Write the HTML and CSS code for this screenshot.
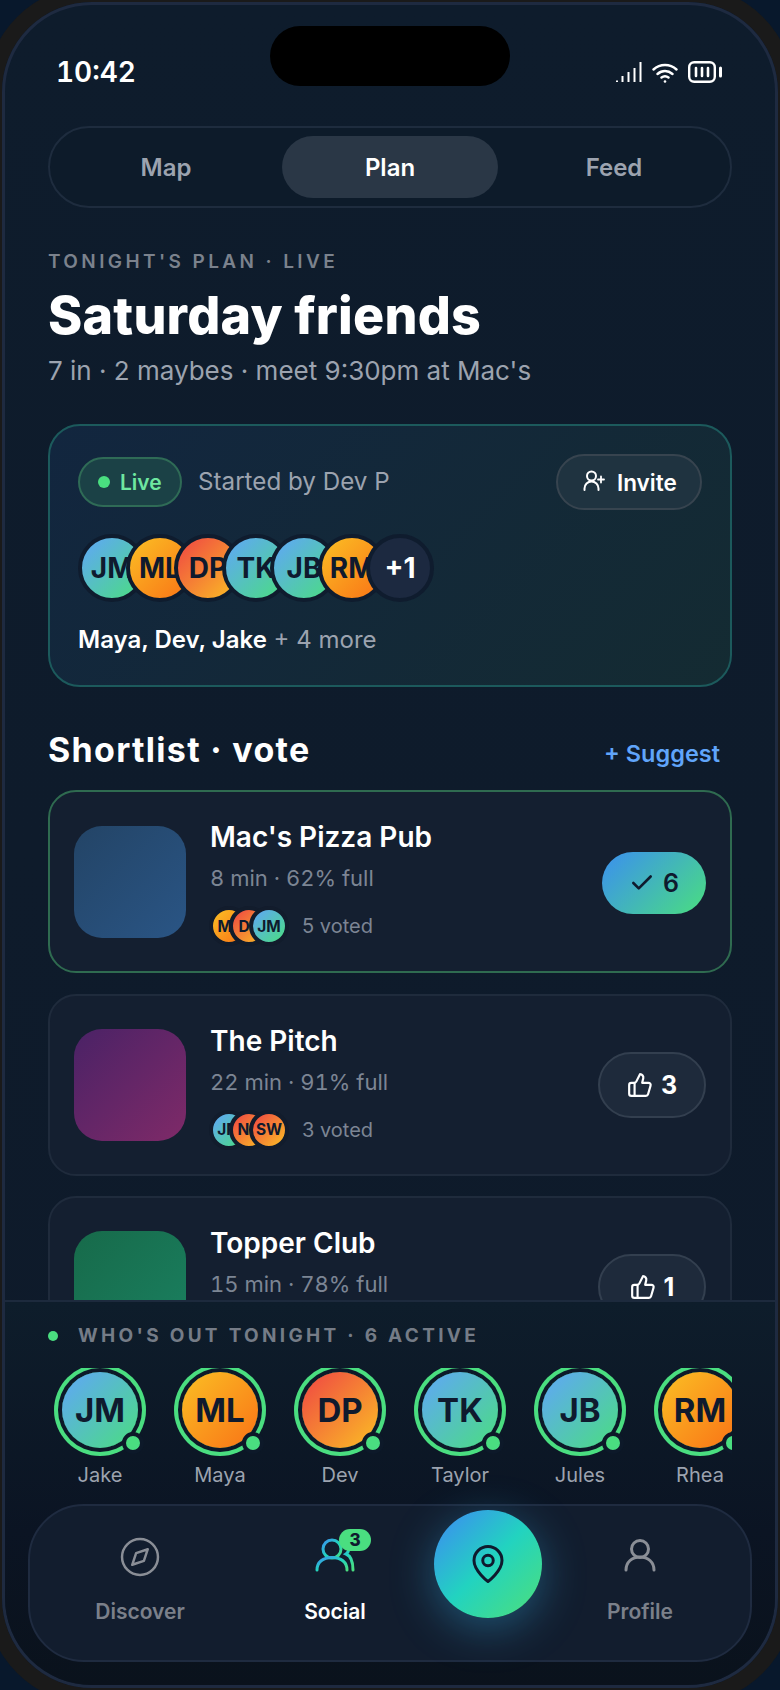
FILE: index.html
```html
<!DOCTYPE html>
<html lang="en">
<head>
<meta charset="utf-8">
<title>Saturday friends</title>
<link rel="stylesheet" href="styles.css">
</head>
<body>
<svg class="defs" width="0" height="0" aria-hidden="true">
  <defs>
    <linearGradient id="socialGrad" x1="0" y1="0" x2="1" y2="1">
      <stop offset="0" stop-color="#3b8ff0"/>
      <stop offset="0.5" stop-color="#22d3c0"/>
      <stop offset="1" stop-color="#4ade80"/>
    </linearGradient>
  </defs>
</svg>
<div class="screen">
  <div class="island"></div>
  <header class="status">
    <span class="time">10:42</span>
    <div class="status-icons">
      <svg class="ic-signal" width="26" height="22" viewBox="0 0 26 22" fill="none" stroke="#fff" stroke-width="2"><path d="M1 21v-1.500M6.500 21v-6M12.500 21v-10M18.500 21v-14M24.500 21v-20"/></svg>
      <svg class="ic-wifi" width="26" height="21" viewBox="0 0 26 21" fill="none" stroke="#fff" stroke-width="2.400" stroke-linecap="round"><path d="M1.500 7.500C8 1.500 18 1.500 24.500 7.500M5.500 12C10 8 16 8 20.500 12M9.500 15.500C11.500 14 14.500 14 16.500 15.500"/><circle cx="13" cy="19.500" r="1.300" fill="#fff" stroke="none"/></svg>
      <svg class="ic-batt" width="36" height="22" viewBox="0 0 36 22" fill="none" stroke="#fff"><rect x="1.200" y="1.200" width="25.600" height="19.600" rx="5" stroke-width="2.400"/><path d="M8 7v8M14 7v8M20 7v8" stroke-width="2.600" stroke-linecap="round"/><path d="M32.500 7v8" stroke-width="3" stroke-linecap="round"/></svg>
    </div>
  </header>

  <main class="main">
    <nav class="tabs">
      <div class="tab">Map</div>
      <div class="tab tab-on">Plan</div>
      <div class="tab">Feed</div>
    </nav>

    <p class="eyebrow">TONIGHT'S PLAN · LIVE</p>
    <h1 class="title">Saturday friends</h1>
    <p class="sub">7 in · 2 maybes · meet 9:30pm at Mac's</p>

    <section class="hero">
      <div class="hero-top">
        <span class="live"><i class="live-dot"></i>Live</span>
        <span class="started">Started by Dev P</span>
        <button class="invite">
          <svg width="26" height="26" viewBox="0 0 26 26" fill="none" stroke="#fff" stroke-width="2" stroke-linecap="round"><circle cx="10.500" cy="7" r="4.500"/><path d="M3.500 21v-1.500a6.500 6.500 0 0 1 14 0V21"/><path d="M20 7.500v6M17 10.500h6" stroke-width="1.800"/></svg>
          Invite
        </button>
      </div>
      <div class="stack">
        <span class="av av-blue">JM</span>
        <span class="av av-orange">ML</span>
        <span class="av av-red">DP</span>
        <span class="av av-blue">TK</span>
        <span class="av av-blue">JB</span>
        <span class="av av-orange">RM</span>
        <span class="av av-more">+1</span>
      </div>
      <p class="names"><b>Maya, Dev, Jake</b> + 4 more</p>
    </section>

    <div class="sec-head">
      <h2 class="sec-title">Shortlist · vote</h2>
      <span class="suggest">+ Suggest</span>
    </div>

    <article class="card card-top">
      <div class="thumb thumb-blue"></div>
      <div class="card-body">
        <h3 class="card-title">Mac's Pizza Pub</h3>
        <p class="card-meta">8 min · 62% full</p>
        <div class="voters">
          <span class="mini av-orange">ML</span><span class="mini av-red">DP</span><span class="mini av-blue">JM</span>
          <span class="voted">5 voted</span>
        </div>
      </div>
      <button class="vote vote-on">
        <svg width="26" height="26" viewBox="0 0 24 24" fill="none" stroke="#0f1a2e" stroke-width="2.400" stroke-linecap="round" stroke-linejoin="round"><path d="M20 6 9 17l-5-5"/></svg>
        6
      </button>
    </article>

    <article class="card">
      <div class="thumb thumb-purple"></div>
      <div class="card-body">
        <h3 class="card-title">The Pitch</h3>
        <p class="card-meta">22 min · 91% full</p>
        <div class="voters">
          <span class="mini av-blue">JM</span><span class="mini av-red">NK</span><span class="mini av-red">SW</span>
          <span class="voted">3 voted</span>
        </div>
      </div>
      <button class="vote">
        <svg width="26" height="26" viewBox="0 0 24 24" fill="none" stroke="#fff" stroke-width="2" stroke-linecap="round" stroke-linejoin="round"><path d="M7 10v12"/><path d="M15 5.880 14 10h5.830a2 2 0 0 1 1.920 2.560l-2.330 8A2 2 0 0 1 17.500 22H4a2 2 0 0 1-2-2v-8a2 2 0 0 1 2-2h2.760a2 2 0 0 0 1.790-1.110L12 2a3.130 3.130 0 0 1 3 3.880Z"/></svg>
        3
      </button>
    </article>

    <article class="card">
      <div class="thumb thumb-green"></div>
      <div class="card-body">
        <h3 class="card-title">Topper Club</h3>
        <p class="card-meta">15 min · 78% full</p>
        <div class="voters"></div>
      </div>
      <button class="vote">
        <svg width="26" height="26" viewBox="0 0 24 24" fill="none" stroke="#fff" stroke-width="2" stroke-linecap="round" stroke-linejoin="round"><path d="M7 10v12"/><path d="M15 5.880 14 10h5.830a2 2 0 0 1 1.920 2.560l-2.330 8A2 2 0 0 1 17.500 22H4a2 2 0 0 1-2-2v-8a2 2 0 0 1 2-2h2.760a2 2 0 0 0 1.790-1.110L12 2a3.130 3.130 0 0 1 3 3.880Z"/></svg>
        1
      </button>
    </article>
  </main>

  <footer class="panel">
    <div class="out-head"><i class="out-dot"></i>WHO'S OUT TONIGHT · 6 ACTIVE</div>
    <div class="people">
      <div class="person"><div class="ring av-blue">JM<i class="online"></i></div><span class="pname">Jake</span></div>
      <div class="person"><div class="ring av-orange">ML<i class="online"></i></div><span class="pname">Maya</span></div>
      <div class="person"><div class="ring av-red">DP<i class="online"></i></div><span class="pname">Dev</span></div>
      <div class="person"><div class="ring av-blue">TK<i class="online"></i></div><span class="pname">Taylor</span></div>
      <div class="person"><div class="ring av-blue">JB<i class="online"></i></div><span class="pname">Jules</span></div>
      <div class="person"><div class="ring av-orange">RM<i class="online"></i></div><span class="pname">Rhea</span></div>
    </div>
    <nav class="bottom">
      <div class="nav-item">
        <div class="nav-icon">
          <svg width="44" height="44" viewBox="0 0 24 24" fill="none" stroke="#8a8e96" stroke-width="1.350" stroke-linecap="round" stroke-linejoin="round"><circle cx="12" cy="12" r="9.800"/><path d="m16.240 7.760-2.120 6.360-6.360 2.120 2.120-6.360 6.360-2.120z"/></svg>
        </div>
        <span class="nav-label">Discover</span>
      </div>
      <div class="nav-item nav-item-on">
        <div class="nav-icon">
          <svg width="44" height="44" viewBox="0 0 44 44" fill="none" stroke="url(#socialGrad)" stroke-width="3" stroke-linecap="round"><circle cx="19" cy="14" r="9"/><path d="M4 35c0-8 6-12.500 15-12.500S34 27 34 35"/><path d="M29 5c5 1 7.500 5 7 9-.3 2-1.500 4-3 5 5 2 7 7 7 16"/></svg>
          <span class="badge">3</span>
        </div>
        <span class="nav-label">Social</span>
      </div>
      <div class="fab-cell">
        <button class="fab">
          <svg width="42" height="42" viewBox="0 0 24 24" fill="none" stroke="#0f1a2e" stroke-width="1.700" stroke-linecap="round" stroke-linejoin="round"><path d="M20 10c0 6-8 12-8 12s-8-6-8-12a8 8 0 0 1 16 0Z"/><circle cx="12" cy="10" r="3"/></svg>
        </button>
      </div>
      <div class="nav-item">
        <div class="nav-icon">
          <svg width="44" height="44" viewBox="0 0 44 44" fill="none" stroke="#8a8e96" stroke-width="3" stroke-linecap="round"><circle cx="22" cy="14" r="8.500"/><path d="M8 35c0-8 6-13 14-13s14 5 14 13"/></svg>
        </div>
        <span class="nav-label">Profile</span>
      </div>
    </nav>
  </footer>
</div>
</body>
</html>
```
FILE: styles.css
```css
* { box-sizing: border-box; margin: 0; padding: 0; }
html, body { height: 100%; }
body {
  background: #08182c;
  padding: 2px;
  overflow: hidden;
  font-family: Inter, "Liberation Sans", sans-serif;
  color: #fff;
}
.defs { position: absolute; }
button { font-family: inherit; color: inherit; border: 0; background: none; }
i { display: block; }

.screen {
  position: relative;
  width: 776px;
  height: 1686px;
  border: 3px solid #1e2a40;
  border-radius: 90px;
  box-shadow: 0 0 0 16px #1a1a1a;
  background: linear-gradient(180deg, #0e1c2c 0%, #0e1a2a 100%);
  display: flex;
  flex-direction: column;
  overflow: hidden;
}
.island {
  position: absolute;
  left: 265px;
  top: 21px;
  width: 240px;
  height: 60px;
  border-radius: 30px;
  background: #000;
}
.status {
  flex: none;
  height: 121px;
  padding: 48px 51px 0 51px;
  display: flex;
  justify-content: space-between;
  align-items: flex-start;
}
.time { font-size: 28px; font-weight: 600; line-height: 38px; font-variant-numeric: tabular-nums; }
.status-icons { display: flex; align-items: flex-end; gap: 10px; height: 22px; margin-top: 8px; }

.main { flex: 1; min-height: 0; overflow: hidden; padding: 0 43px; }

.tabs {
  height: 82px;
  border: 2px solid #1e2c3e;
  border-radius: 41px;
  background: #0d1b2a;
  padding: 8px;
  display: flex;
  gap: 8px;
}
.tab {
  flex: 1;
  display: flex;
  align-items: center;
  justify-content: center;
  border-radius: 31px;
  font-size: 24px;
  font-weight: 600;
  color: #9ca3af;
}
.tab-on { background: #2a3746; color: #fff; }

.eyebrow {
  margin-top: 42px;
  font-size: 19px;
  line-height: 24px;
  font-weight: 600;
  letter-spacing: 3.400px;
  color: #7b828d;
}
.title {
  margin-top: 12px;
  font-size: 52px;
  line-height: 60px;
  font-weight: 800;
  letter-spacing: 0.200px;
}
.sub {
  margin-top: 9px;
  font-size: 26px;
  line-height: 32px;
  color: #9ca3af;
}

.hero {
  margin-top: 37px;
  height: 263px;
  border: 2px solid #1c5a5c;
  border-radius: 32px;
  padding: 28px;
  background: linear-gradient(135deg, #12263f 0%, #142b32 100%);
}
.hero-top { display: flex; align-items: center; }
.live {
  display: flex;
  align-items: center;
  gap: 10px;
  height: 50px;
  width: 104px;
  padding-left: 18px;
  border: 2px solid #2f6b56;
  border-radius: 25px;
  background: #1b4146;
  font-size: 21px;
  font-weight: 600;
  color: #6ee7a0;
}
.live-dot { width: 12px; height: 12px; border-radius: 50%; background: #4ade80; }
.started { margin-left: 16px; margin-bottom: 2px; font-size: 24.200px; color: #9ca3af; }
.invite {
  margin-left: auto;
  display: flex;
  align-items: center;
  gap: 10px;
  width: 146px;
  height: 56px;
  padding-left: 23px;
  border: 2px solid #37444f;
  border-radius: 28px;
  background: #1f3340;
  font-size: 22.500px;
  font-weight: 600;
}

.stack { display: flex; margin-top: 24px; }
.av {
  flex: none;
  width: 68px;
  height: 68px;
  margin-left: -20px;
  border: 4px solid #0f1c2e;
  border-radius: 50%;
  display: flex;
  align-items: center;
  justify-content: center;
  font-size: 28px;
  font-weight: 700;
  color: #0f1a2e;
}
.av:first-child { margin-left: 0; }
.av-blue { background: linear-gradient(135deg, #60a5fa, #4ade80); }
.av-orange { background: linear-gradient(135deg, #fbbf24, #f97316); }
.av-red { background: linear-gradient(135deg, #ef4444, #fbbf24); }
.av-more { background: #1c2940; color: #fff; }
.names {
  margin-top: 23px;
  font-size: 24px;
  line-height: 30px;
  color: #9ca3af;
}
.names b { font-weight: 600; color: #fff; }

.sec-head {
  margin-top: 43px;
  height: 40px;
  display: flex;
  align-items: center;
  justify-content: space-between;
}
.sec-title { font-size: 34px; font-weight: 700; line-height: 40px; letter-spacing: 1.300px; }
.suggest {
  margin-right: 12px;
  margin-top: 6px;
  font-size: 23.500px;
  font-weight: 600;
  color: #60a5fa;
}

.card {
  margin-top: 20px;
  height: 182px;
  border: 2px solid #1f2b3c;
  border-radius: 28px;
  background: #141f30;
  padding: 0 24px;
  display: flex;
  align-items: center;
}
.card-top { height: 183px; border-color: #2f6b50; }
.card-top + .card { margin-top: 21px; }
.thumb { flex: none; width: 112px; height: 112px; border-radius: 28px; }
.thumb-blue { background: linear-gradient(135deg, #234466, #2a5585); }
.thumb-purple { background: linear-gradient(135deg, #4a2266, #7f2a68); }
.thumb-green { background: linear-gradient(135deg, #176a4a, #1a8060); }
.card-body { flex: 1; margin-left: 24px; margin-top: 2px; }
.card-title { font-size: 28px; font-weight: 600; line-height: 36px; }
.card-meta { margin-top: 8px; font-size: 22px; line-height: 30px; color: #7c8594; font-variant-numeric: tabular-nums; }
.voters { margin-top: 13px; height: 40px; display: flex; align-items: center; }
.mini {
  flex: none;
  width: 40px;
  height: 40px;
  margin-left: -20px;
  border: 4px solid #121c2c;
  border-radius: 50%;
  display: flex;
  align-items: center;
  justify-content: center;
  font-size: 15.500px;
  font-weight: 700;
  color: #0f1a2e;
}
.mini:first-child { margin-left: -1px; }
.voted { margin-left: 13px; font-size: 20px; color: #7c8594; }
.vote {
  flex: none;
  width: 108px;
  height: 66px;
  border: 2px solid #333f4f;
  border-radius: 33px;
  background: #1e2a3b;
  display: flex;
  align-items: center;
  justify-content: center;
  gap: 8px;
  font-size: 25px;
  font-weight: 700;
  color: #fff;
}
.vote-on {
  width: 104px;
  height: 62px;
  margin-top: 2px;
  border: 0;
  background: linear-gradient(135deg, #3b8ff0, #4ade80);
  color: #0f1a2e;
  font-weight: 600;
}

.panel {
  flex: none;
  height: 385px;
  border-top: 2px solid #1d2a3d;
  padding: 22px 23px 23px;
  background: linear-gradient(180deg, #0e1d2b 0%, #0b1423 60%, #0a121c 100%);
  position: relative;
}
.out-head {
  margin-left: 20px;
  display: flex;
  align-items: center;
  gap: 20px;
  font-size: 19px;
  line-height: 24px;
  font-weight: 700;
  letter-spacing: 3.300px;
  color: #757c87;
}
.out-dot { width: 10px; height: 10px; border-radius: 50%; background: #4ade80; }
.people {
  margin: 20px 20px 0;
  padding-top: 4px;
  display: flex;
  gap: 16px;
  overflow: hidden;
}
.person { flex: none; width: 104px; display: flex; flex-direction: column; align-items: center; }
.ring {
  position: relative;
  width: 76px;
  height: 76px;
  border-radius: 50%;
  box-shadow: 0 0 0 4px #0d1929, 0 0 0 8px #4ade80;
  display: flex;
  align-items: center;
  justify-content: center;
  font-size: 33px;
  font-weight: 700;
  color: #0f1a2e;
}
.online {
  position: absolute;
  right: -6px;
  bottom: -6px;
  width: 22px;
  height: 22px;
  border: 4px solid #0d1929;
  border-radius: 50%;
  background: #4ade80;
}
.pname { margin-top: 13px; font-size: 20px; line-height: 28px; color: #9ca3af; }

.bottom {
  margin-top: 15px;
  height: 158px;
  border: 2px solid #1f2b40;
  border-radius: 56px;
  background: #121d2e;
  padding-right: 26px;
  display: grid;
  grid-template-columns: 220px 170px 136px 168px;
}
.nav-item { display: flex; flex-direction: column; align-items: center; padding-top: 29px; }
.nav-icon { position: relative; width: 44px; height: 44px; }
.nav-icon svg { display: block; }
.nav-label { margin-top: 18px; font-size: 21px; line-height: 30px; font-weight: 600; color: #7b808a; }
.nav-item-on .nav-label { color: #fff; }
.badge {
  position: absolute;
  left: 26px;
  top: -6px;
  width: 32px;
  height: 22px;
  border-radius: 11px;
  background: #4ade80;
  color: #0f1a2e;
  display: flex;
  align-items: center;
  justify-content: center;
  font-size: 17px;
  font-weight: 800;
}
.fab-cell { display: flex; justify-content: center; padding-top: 4px; }
.fab {
  width: 108px;
  height: 108px;
  border-radius: 50%;
  background: linear-gradient(135deg, #3b8ff0 5%, #22d3c0 50%, #4ade80 95%);
  box-shadow: 0 10px 44px rgba(56, 189, 248, 0.35);
  display: flex;
  align-items: center;
  justify-content: center;
}
```
